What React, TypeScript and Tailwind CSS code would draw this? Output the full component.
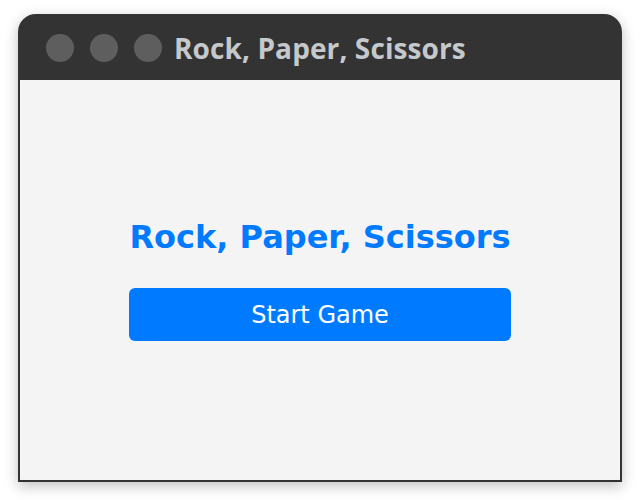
export default function App() {
  return (
    <div className="w-[640px] h-[500px] bg-white pt-[14px] pl-[18px]">
      <div className="w-[604px] h-[468px] rounded-t-[18px] bg-[#333333] border-2 border-[#333333] flex flex-col shadow-[0_4px_14px_rgba(0,0,0,0.25)] overflow-hidden">
        {/* Title bar */}
        <div className="h-[64px] shrink-0 flex items-center pl-[26px] gap-4">
          <div className="w-7 h-7 rounded-full bg-[#5e5e5e]" />
          <div className="w-7 h-7 rounded-full bg-[#5e5e5e]" />
          <div className="w-7 h-7 rounded-full bg-[#5e5e5e]" />
          <span
            className="ml-[-4px] text-[28px] font-bold text-[#c6c9cc] tracking-[0.1px]"
            style={{ fontFamily: '"Open Sans", "DejaVu Sans", sans-serif' }}
          >
            Rock, Paper, Scissors
          </span>
        </div>

        {/* Content */}
        <div
          className="flex-1 bg-[#f4f4f4] flex flex-col items-center justify-center pt-[2px]"
          style={{ fontFamily: '"DejaVu Sans", sans-serif' }}
        >
          <h1 className="text-[32px] font-bold text-[#007bff] leading-none">
            Rock, Paper, Scissors
          </h1>
          <button className="mt-[35px] w-[382px] h-[53px] rounded-[6px] bg-[#007bff] text-white text-[24px]">
            Start Game
          </button>
        </div>
      </div>
    </div>
  );
}
